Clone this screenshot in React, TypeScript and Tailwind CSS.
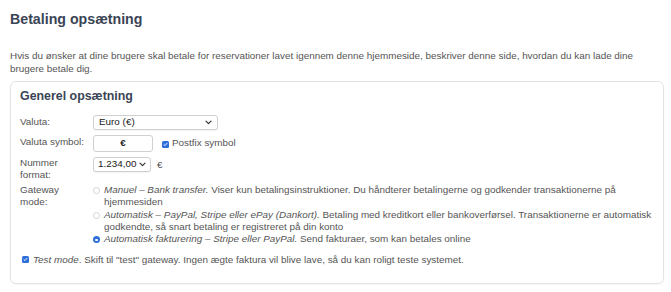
import React from 'react';

const Chevron: React.FC = () => (
  <svg width="7" height="5" viewBox="0 0 7 5" className="shrink-0">
    <path d="M1 1.2 L3.5 3.7 L6 1.2" fill="none" stroke="#333" strokeWidth="1.2" strokeLinecap="round" strokeLinejoin="round" />
  </svg>
);

const Check: React.FC = () => (
  <span className="flex h-[7px] w-[7px] shrink-0 items-center justify-center rounded-[1.5px] bg-[#2f6fdc]">
    <svg width="5" height="5" viewBox="0 0 5 5">
      <path d="M0.9 2.6 L2 3.6 L4.1 1.2" fill="none" stroke="#fff" strokeWidth="0.9" strokeLinecap="round" strokeLinejoin="round" />
    </svg>
  </span>
);

const Radio: React.FC<{ on?: boolean }> = ({ on }) =>
  on ? (
    <span className="mt-[3px] flex h-[7px] w-[7px] shrink-0 items-center justify-center rounded-full bg-[#2f6fdc]">
      <span className="h-[2.5px] w-[2.5px] rounded-full bg-white" />
    </span>
  ) : (
    <span className="mt-[3px] h-[7px] w-[7px] shrink-0 rounded-full border border-[#d4d4d4] bg-white" />
  );

const gateways = [
  {
    name: 'Manuel – Bank transfer.',
    text: ' Viser kun betalingsinstruktioner. Du håndterer betalingerne og godkender transaktionerne på hjemmesiden',
  },
  {
    name: 'Automatisk – PayPal, Stripe eller ePay (Dankort).',
    text: ' Betaling med kreditkort eller bankoverførsel. Transaktionerne er automatisk godkendte, så snart betaling er registreret på din konto',
  },
  {
    name: 'Automatisk fakturering – Stripe eller PayPal.',
    text: ' Send fakturaer, som kan betales online',
    on: true,
  },
];

export default function App() {
  return (
    <div className="min-h-[292px] w-[671px] bg-white px-[10px] font-['Liberation_Sans',Arial,sans-serif] text-[9.9px] text-[#555]">
      <h1 className="pt-[8px] text-[14.2px] font-bold leading-[22px] text-[#3a4455]">Betaling opsætning</h1>

      <p className="mt-[19px] pr-[20px] leading-[13.3px]">
        Hvis du ønsker at dine brugere skal betale for reservationer lavet igennem denne hjemmeside, beskriver denne side, hvordan du kan lade dine brugere betale dig.
      </p>

      <div className="mt-[5px] w-[654px] rounded-[6px] border border-[#e3e3e3] px-[9px] pb-[17px] pt-[6px] shadow-[0_1px_2px_rgba(0,0,0,0.04)]">
        <h2 className="text-[12.4px] font-bold leading-[17px] text-[#3a4455]">Generel opsætning</h2>

        <div className="mt-[10px] flex items-start">
          <span className="w-[73px] shrink-0 pt-[1px] leading-[12.3px]">Valuta:</span>
          <div className="flex h-[15px] w-[125px] items-center justify-between rounded-[3px] border border-[#d0d0d0] bg-white pl-[5px] pr-[5px] text-[#222] shadow-[0_1px_1px_rgba(0,0,0,0.05)]">
            <span>Euro (€)</span>
            <Chevron />
          </div>
        </div>

        <div className="mt-[5px] flex items-start">
          <span className="w-[73px] shrink-0 pt-[1px] leading-[12.3px]">Valuta symbol:</span>
          <div className="flex h-[17px] w-[60px] items-center justify-center rounded-[3px] border border-[#d0d0d0] bg-white font-bold text-[#222]">
            €
          </div>
          <div className="ml-[9px] flex h-[17px] items-center gap-[3px]">
            <span className="mt-[2px]"><Check /></span>
            <span className="mt-[1px]">Postfix symbol</span>
          </div>
        </div>

        <div className="mt-[5px] flex items-start">
          <span className="w-[73px] shrink-0 leading-[12.3px]">
            Nummer
            <br />
            format:
          </span>
          <div className="flex h-[15px] w-[58px] items-center justify-between gap-[3px] rounded-[3px] border border-[#d0d0d0] bg-white pl-[4px] pr-[4px] text-[#222] shadow-[0_1px_1px_rgba(0,0,0,0.05)]">
            <span className="whitespace-nowrap">1.234,00</span>
            <Chevron />
          </div>
          <span className="ml-[6px] leading-[15px]">€</span>
        </div>

        <div className="mt-[3px] flex items-start">
          <span className="w-[73px] shrink-0 leading-[12.3px]">
            Gateway
            <br />
            mode:
          </span>
          <div className="flex flex-col leading-[12.3px]">
            {gateways.map((g) => (
              <div key={g.name} className="flex items-start gap-[4px]">
                <Radio on={g.on} />
                <p className="max-w-[552px]">
                  <em>{g.name}</em>
                  {g.text}
                </p>
              </div>
            ))}
          </div>
        </div>

        <div className="mt-[8px] flex items-center gap-[4px] leading-[12.3px]">
          <span className="ml-[2px]"><Check /></span>
          <span>
            <em>Test mode</em>. Skift til "test" gateway. Ingen ægte faktura vil blive lave, så du kan roligt teste systemet.
          </span>
        </div>
      </div>
    </div>
  );
}
